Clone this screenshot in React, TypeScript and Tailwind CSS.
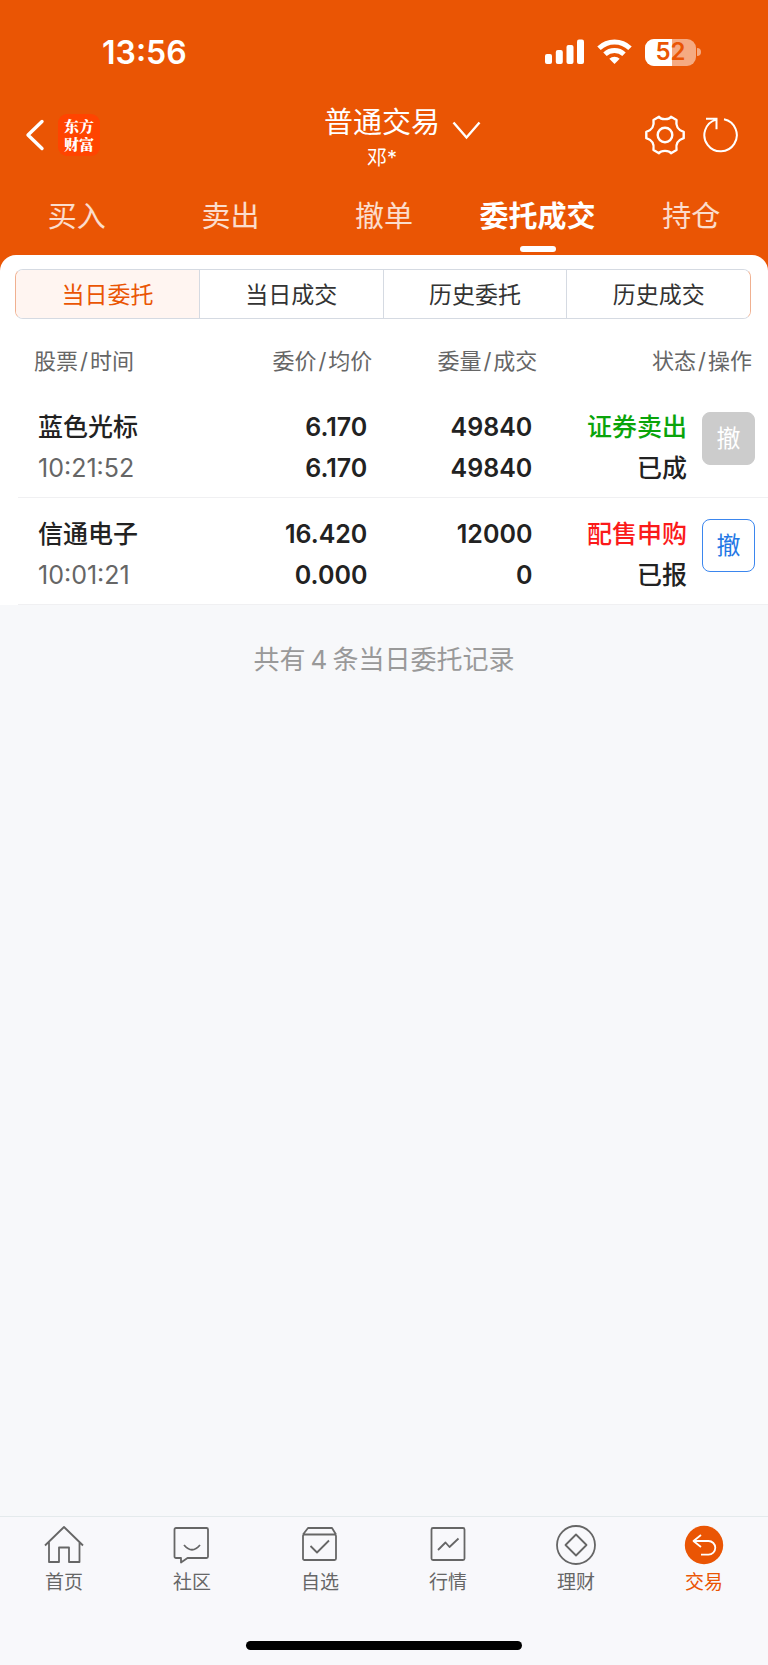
import type { ReactNode } from "react";

const tabs = ["买入", "卖出", "撤单", "委托成交", "持仓"];
const activeTab = "委托成交";
const segments = ["当日委托", "当日成交", "历史委托", "历史成交"];

type Order = {
  name: string;
  time: string;
  price: string;
  average: string;
  amount: string;
  filled: string;
  side: string;
  sell: boolean;
  state: string;
  cancellable: boolean;
};

const orders: Order[] = [
  { name: "蓝色光标", time: "10:21:52", price: "6.170", average: "6.170", amount: "49840", filled: "49840", side: "证券卖出", sell: true, state: "已成", cancellable: false },
  { name: "信通电子", time: "10:01:21", price: "16.420", average: "0.000", amount: "12000", filled: "0", side: "配售申购", sell: false, state: "已报", cancellable: true },
];

function StatusBar() {
  return (
    <div className="flex h-[104px] items-center justify-between pr-[67px] pl-[102px]">
      <span className="pt-0.5 text-[32px] leading-10 font-semibold">13:56</span>
      <div className="flex items-center gap-[13px]">
        <svg width="39" height="26" viewBox="0 0 39 26" fill="#fff" aria-hidden="true">
          <rect x="0" y="15" width="7" height="10" rx="2" />
          <rect x="10.800" y="11" width="7" height="14" rx="2" />
          <rect x="21.500" y="6" width="7" height="19" rx="2" />
          <rect x="32" y="0.500" width="7" height="24.500" rx="2" />
        </svg>
        <svg width="35" height="26" viewBox="0 0 35 26" fill="none" stroke="#fff" strokeWidth="5" aria-hidden="true">
          <path d="M2 9.300a22.300 22.300 0 0 1 31 0" />
          <path d="M8 15.300a13.800 13.800 0 0 1 19 0" />
          <path d="M17.500 25l-5.200-5.200a7.400 7.400 0 0 1 10.400 0z" fill="#fff" stroke="none" />
        </svg>
        <div className="flex items-center gap-px">
          <div className="relative flex h-[27px] w-[51px] items-center justify-center overflow-hidden rounded-[9px] bg-white/50 text-[24px] leading-none font-semibold text-[#ea5504]">
            <div className="absolute inset-y-0 left-0 w-[52%] bg-white" />
            <span className="relative">52</span>
          </div>
          <div className="h-2 w-1 rounded-r-full bg-white/50" />
        </div>
      </div>
    </div>
  );
}

function TitleBar() {
  return (
    <div className="grid h-[70px] grid-cols-[1fr_auto_1fr] items-center pr-[29px] pl-[25px]">
      <div className="flex items-center gap-[13px] pb-2">
        <button type="button" aria-label="返回">
          <svg width="20" height="32" viewBox="0 0 20 32" fill="none" stroke="#fff" strokeWidth="3.400" strokeLinecap="round" strokeLinejoin="round">
            <path d="M17 2.500L3 16l14 13.500" />
          </svg>
        </button>
        <div className="flex size-[42px] items-center justify-center rounded-[9px] bg-[#ff4400] text-center font-['Noto_Serif_CJK_SC','Noto_Sans_CJK_SC',serif] text-[15px] leading-[18px] font-black">
          <p>
            东方
            <br />
            财富
          </p>
        </div>
      </div>
      <div className="flex items-center gap-3 pl-[41px]">
        <div className="flex flex-col items-center">
          <span className="text-[29px] leading-[38px]">普通交易</span>
          <span className="text-[20px] leading-[32px]">邓*</span>
        </div>
        <button type="button" aria-label="切换账户" className="mb-4">
          <svg width="29" height="20" viewBox="0 0 29 20" fill="none" stroke="#fff" strokeWidth="2.400">
            <path d="M1.500 1.500l13 15 13-15" />
          </svg>
        </button>
      </div>
      <div className="flex items-center justify-end gap-[18px] pb-2">
        <button type="button" aria-label="设置">
          <svg width="40" height="40" viewBox="0 0 40 40" fill="none" stroke="#fff" strokeWidth="2.400" strokeLinejoin="round">
            <path d="M14 1.800C16 4.900 24 4.900 26 1.800L31.500 5C30.500 12 33 15 38.700 16.800V23.200C33 25 30.500 28 31.500 35L26 38.200C24 35.100 16 35.100 14 38.200L8.500 35C9.500 28 7 25 1.300 23.200V16.800C7 15 9.500 12 8.500 5Z" />
            <circle cx="20" cy="20" r="7.300" />
          </svg>
        </button>
        <button type="button" aria-label="刷新">
          <svg width="36" height="36" viewBox="0 0 36 36" fill="none" stroke="#fff" strokeWidth="2">
            <path d="M21 2.300A16.200 16.200 0 1 1 13 2.600M3 1.800h10.500v10.500" />
          </svg>
        </button>
      </div>
    </div>
  );
}

function SegmentBar() {
  return (
    <div className="mr-[17px] ml-[15px] flex h-[50px] divide-x divide-[#d5dae2] overflow-hidden rounded-lg border border-x-[#f0b090] border-y-[#d5dae2]">
      {segments.map((label, i) => (
        <button
          key={label}
          type="button"
          className={
            i === 0
              ? "flex-1 bg-[#fff5f1] pt-0.5 text-[23px] text-[#ea5504]"
              : "flex-1 bg-white pt-0.5 text-[23px] text-[#333333]"
          }
        >
          {label}
        </button>
      ))}
    </div>
  );
}

function PairLabel({ first, second }: { first: string; second: string }) {
  return (
    <>
      {first}
      <span className="mx-[2px]">/</span>
      {second}
    </>
  );
}

function OrderTable() {
  return (
    <div className="pl-[18px]">
      <table className="w-full table-fixed border-collapse text-right">
        <thead>
          <tr className="h-[71px] text-[22px] text-[#666666]">
            <th className="w-[24.25%] pt-[13px] pl-4 text-left font-normal"><PairLabel first="股票" second="时间" /></th>
            <th className="w-[23%] pt-[13px] font-normal"><PairLabel first="委价" second="均价" /></th>
            <th className="w-[22%] pt-[13px] font-normal"><PairLabel first="委量" second="成交" /></th>
            <th className="w-[30.75%] pt-[13px] pr-4 font-normal"><PairLabel first="状态" second="操作" /></th>
          </tr>
        </thead>
        <tbody className="text-[25px] leading-[41px] font-medium text-[#222222]">
          {orders.map((order) => (
            <tr key={order.name} className="h-[107px] border-b border-[#f0f0f2]">
              <td className="pt-[9px] pl-5 text-left">
                <div>{order.name}</div>
                <div className="font-normal text-[#666666]">{order.time}</div>
              </td>
              <td className="pt-[9px] pr-[5px] font-semibold">
                <div>{order.price}</div>
                <div>{order.average}</div>
              </td>
              <td className="pt-[9px] pr-[5px] font-semibold">
                <div>{order.amount}</div>
                <div>{order.filled}</div>
              </td>
              <td className="pt-[9px] pr-[13px]">
                <div className="flex items-center justify-end gap-[15px]">
                  <div>
                    <div className={order.sell ? "text-[#0aa40a]" : "text-[#fb1a1a]"}>{order.side}</div>
                    <div>{order.state}</div>
                  </div>
                  <button
                    type="button"
                    disabled={!order.cancellable}
                    className={
                      order.cancellable
                        ? "mb-[19px] size-[53px] rounded-lg border border-[#3b86ee] bg-white text-[24px] font-normal text-[#2478e5]"
                        : "mb-[19px] size-[53px] rounded-lg border border-[#cccccc] bg-[#cccccc] text-[24px] font-normal text-white"
                    }
                  >
                    撤
                  </button>
                </div>
              </td>
            </tr>
          ))}
        </tbody>
      </table>
    </div>
  );
}

const navItems: { label: string; icon: ReactNode }[] = [
  {
    label: "首页",
    icon: <path d="M1 20.500L20 2l19 18.500M5 17v20h10V22.500h10V37h10.500V17" />,
  },
  {
    label: "社区",
    icon: <path d="M5 3h29.500a1.500 1.500 0 0 1 1.500 1.500v27a1.500 1.500 0 0 1-1.500 1.500H15.500l-6.500 4.500V33H4a1.500 1.500 0 0 1-1.500-1.500v-27A1.500 1.500 0 0 1 4 3h1M12 20q8 9.500 16 0" />,
  },
  {
    label: "自选",
    icon: <path d="M3 9.500L8 3h24l4 6.500M4.500 9.500h30A1.500 1.500 0 0 1 36 11v22.500a1.500 1.500 0 0 1-1.500 1.500h-30A1.500 1.500 0 0 1 3 33.500V11a1.500 1.500 0 0 1 1.500-1.500zM10.500 21l6.500 6.500L29 15.500" />,
  },
  {
    label: "行情",
    icon: <path d="M5 3h30a1.500 1.500 0 0 1 1.500 1.500v29A1.500 1.500 0 0 1 35 35H5a1.500 1.500 0 0 1-1.500-1.500v-29A1.500 1.500 0 0 1 5 3zM10 25l7.500-7.500 4 4.500 9-8.500" />,
  },
  {
    label: "理财",
    icon: (
      <>
        <circle cx="20" cy="20" r="19" />
        <path d="M20 9.500L30.500 20 20 30.500 9.500 20z" />
      </>
    ),
  },
  {
    label: "交易",
    icon: (
      <>
        <circle cx="20" cy="20" r="19.200" fill="#ea5504" stroke="none" />
        <path d="M17 10L9.500 16l7.500 6M9.500 16h15a6.800 6.800 0 0 1 0 13.600H17" stroke="#fff" />
      </>
    ),
  },
];

function BottomNav() {
  return (
    <nav className="border-t border-[#e4eaec] bg-[#f8f8fb] pt-2 pb-[15px]">
      <div className="grid grid-cols-6">
        {navItems.map(({ label, icon }) => (
          <a
            key={label}
            href="#"
            aria-current={label === "交易" ? "page" : undefined}
            className={
              label === "交易"
                ? "flex flex-col items-center gap-1 text-[#ea5504]"
                : "flex flex-col items-center gap-1 text-[#666666]"
            }
          >
            <svg width="40" height="40" viewBox="0 0 40 40" fill="none" stroke="currentColor" strokeWidth="1.800" strokeLinejoin="round" aria-hidden="true">
              {icon}
            </svg>
            <span className="text-[19px] leading-7">{label}</span>
          </a>
        ))}
      </div>
      <div className="mx-auto mt-11 h-[9px] w-[36%] rounded-full bg-black" />
    </nav>
  );
}

export default function App() {
  return (
    <div className="flex min-h-screen flex-col bg-[#f7f8fa] font-['Inter','Noto_Sans_CJK_SC',sans-serif]">
      <header className="bg-[#ea5504] text-white">
        <StatusBar />
        <TitleBar />
        <nav className="grid h-[81px] grid-cols-5">
          {tabs.map((label) => (
            <a
              key={label}
              href="#"
              className={
                label === activeTab
                  ? "flex flex-col items-center pt-[23px] text-[29px] leading-[40px] font-bold whitespace-nowrap"
                  : "flex flex-col items-center pt-[23px] text-[29px] leading-[40px] text-white/80"
              }
            >
              {label}
              {label === activeTab && <span className="mt-[9px] h-[6px] w-9 rounded-full bg-white" />}
            </a>
          ))}
        </nav>
      </header>
      <div className="bg-[#ea5504]">
        <section className="rounded-t-2xl bg-white pt-[14px]">
          <SegmentBar />
          <OrderTable />
        </section>
      </div>
      <p className="mt-[36px] flex-1 text-center text-[26px] leading-[38px] text-[#999999]">
        共有<span className="mx-[5px]">4</span>条当日委托记录
      </p>
      <BottomNav />
    </div>
  );
}
